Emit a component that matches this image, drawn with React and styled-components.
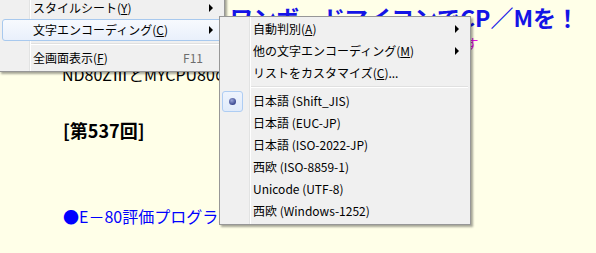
import React from 'react';
import styled, {createGlobalStyle, css} from 'styled-components';

const GlobalStyle = createGlobalStyle`
  html, body {
    margin: 0;
    background: #ffffe8;
  }
  body {
    font-family: "Noto Sans CJK JP", "Noto Sans", sans-serif;
  }
`;

const Page = styled.div`
  position: relative;
  width: 596px;
  height: 253px;
  overflow: hidden;
  background: #ffffe8;
`;

const Content = styled.div`
  display: flex;
  flex-direction: column;
  white-space: nowrap;
`;

const Title = styled.h1`
  margin: 0;
  padding: 5px 0 0 230px;
  font-size: 23px;
  line-height: 24px;
  font-weight: 700;
  color: #1414e6;
`;

const Lead = styled.p`
  margin: 6px 0 0;
  padding-left: 297px;
  font-size: 14px;
  line-height: 16px;
  color: #e010e0;
`;

const Intro = styled.p`
  margin: 13px 0 0;
  padding-left: 62px;
  font-size: 16px;
  line-height: 20px;
  color: #000;
`;

const Heading = styled.h2`
  margin: 35px 0 0;
  padding-left: 63px;
  font-size: 18px;
  line-height: 22px;
  font-weight: 700;
  color: #000;
`;

const Link = styled.a`
  margin-top: 65px;
  padding-left: 63px;
  font-size: 16px;
  line-height: 20px;
  color: #0000ff;
  text-decoration: none;
`;

const Menu = styled.div`
  position: absolute;
  left: ${p => p.$x}px;
  top: ${p => p.$y}px;
  width: ${p => p.$w}px;
  z-index: ${p => p.$z};
  box-sizing: border-box;
  padding: ${p => p.$padTop}px 2px 2px;
  border: 1px solid #979797;
  background:
    linear-gradient(to right, transparent 29px, #e2e3e3 29px, #e2e3e3 30px, #fff 30px, #fff 31px, transparent 31px),
    #f0f0f0;
  box-shadow: 2px 2px 2px rgba(0, 0, 0, 0.35);
  font-size: 12px;
  color: #000;
`;

const Row = styled.div`
  display: flex;
  align-items: center;
  box-sizing: border-box;
  height: 22px;
  border: 1px solid transparent;
  border-radius: 3px;
  line-height: 20px;
  white-space: nowrap;
  ${p => p.$active && css`
    border-color: #a8c9ee;
    background: linear-gradient(to bottom, #f7fafe, #e9f0fb);
  `}
`;

const IconCell = styled.span`
  display: flex;
  align-items: center;
  justify-content: center;
  flex: none;
  width: 21px;
  height: 21px;
  margin: 0 10px 0 -1px;
  box-sizing: border-box;
  ${p => p.$checked && css`
    border: 1px solid #aecdf3;
    border-radius: 3px;
    background: linear-gradient(to bottom, #eef4fd, #e1ebfa);
  `}
`;

const Dot = styled.span`
  width: 7px;
  height: 7px;
  border-radius: 50%;
  background: radial-gradient(circle at 40% 35%, #9aa6d8, #3b4890 70%);
`;

const Label = styled.span`
  flex: 1;
`;

const Shortcut = styled.span`
  margin-right: 18px;
  color: #6d6d6d;
`;

const Arrow = styled.span`
  width: 0;
  height: 0;
  margin-right: 8px;
  border-left: 4px solid #000;
  border-top: 4px solid transparent;
  border-bottom: 4px solid transparent;
`;

const Separator = styled.div`
  padding: 2px 0 2px 29px;
  &::after {
    content: "";
    display: block;
    height: 0;
    border-top: 1px solid #e0e0e0;
    border-bottom: 1px solid #fff;
  }
`;

function Item({children, access, suffix = '', arrow, shortcut, checked, active}) {
  return (
    <Row $active={active}>
      <IconCell $checked={checked}>{checked && <Dot/>}</IconCell>
      <Label>
        {children}
        {access && <>(<u>{access}</u>)</>}
        {suffix}
      </Label>
      {shortcut && <Shortcut>{shortcut}</Shortcut>}
      {arrow && <Arrow/>}
    </Row>
  );
}

const encodings = [
  {name: '日本語 (Shift_JIS)', checked: true},
  {name: '日本語 (EUC-JP)'},
  {name: '日本語 (ISO-2022-JP)'},
  {name: '西欧 (ISO-8859-1)'},
  {name: 'Unicode (UTF-8)'},
  {name: '西欧 (Windows-1252)'},
];

export default function App() {
  return (
    <Page>
      <GlobalStyle/>
      <Content>
        <Title>ワンボードマイコンでCP／Mを！</Title>
        <Lead>最新の記事を更新しています</Lead>
        <Intro>ND80ZⅢとMYCPU80の比較</Intro>
        <Heading>[第537回]</Heading>
        <Link href="#">●E－80評価プログラム</Link>
      </Content>

      <Menu $x={-1} $y={-6} $w={226} $z={1} $padTop={2}>
        <Item access="Y" arrow>スタイルシート</Item>
        <Item access="C" arrow active>文字エンコーディング</Item>
        <Separator/>
        <Item access="F" shortcut="F11">全画面表示</Item>
      </Menu>

      <Menu $x={219} $y={16} $w={252} $z={2} $padTop={1}>
        <Item access="A" arrow>自動判別</Item>
        <Item access="M" arrow>他の文字エンコーディング</Item>
        <Item access="C" suffix="...">リストをカスタマイズ</Item>
        <Separator/>
        {encodings.map(e => (
          <Item key={e.name} checked={e.checked}>{e.name}</Item>
        ))}
      </Menu>
    </Page>
  );
}
